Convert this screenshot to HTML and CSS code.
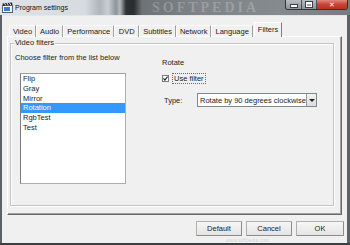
FILE: index.html
```html
<!DOCTYPE html>
<html lang="en">
<head>
    <meta charset="UTF-8">
    <title>Program settings</title>
    <link rel="stylesheet" href="styles.css">
</head>
<body>
<div class="window">
    <!-- Title bar -->
    <div class="titlebar">
        <svg class="app-icon" width="11" height="11" viewBox="0 0 11 11">
            <rect x="0.5" y="3.5" width="10" height="7" fill="#f4f6f8" stroke="#5a6068"/>
            <path d="M0.5 1.5 L10 0.5 L10.5 3 L1 3.8 Z" fill="#222"/>
            <path d="M2.5 1.3 L3.8 3.4 M5 1 L6.3 3.2 M7.5 0.8 L8.8 3" stroke="#fff" stroke-width="0.9"/>
            <rect x="2" y="5" width="6" height="4" fill="#3a7bd5"/>
        </svg>
        <span class="title">Program settings</span>
        <span class="watermark">SOFTPEDIA</span>
        <div class="caption-buttons">
            <span class="cap cap-min"><i></i></span>
            <span class="cap cap-max"><i></i></span>
            <span class="cap cap-close">&#x2715;</span>
        </div>
    </div>

    <!-- Client area -->
    <div class="client">
        <div class="tabs">
            <span class="tab">Video</span>
            <span class="tab">Audio</span>
            <span class="tab">Performance</span>
            <span class="tab">DVD</span>
            <span class="tab">Subtitles</span>
            <span class="tab">Network</span>
            <span class="tab">Language</span>
            <span class="tab active">Filters</span>
        </div>

        <div class="pane">
            <div class="group">
                <div class="group-label">Video filters</div>
                <div class="group-body">
                    <div class="filter-col">
                        <div class="hint">Choose filter from the list below</div>
                        <ul class="filter-list">
                            <li>Flip</li>
                            <li>Gray</li>
                            <li>Mirror</li>
                            <li class="selected">Rotation</li>
                            <li>RgbTest</li>
                            <li>Test</li>
                        </ul>
                    </div>

                    <div class="rotate-col">
                        <div class="rotate-title">Rotate</div>
                        <div class="check-row">
                            <span class="checkbox">
                                <svg width="5" height="5" viewBox="0 0 5 5"><path d="M0.4 2.4 L1.9 4 L4.6 0.6" fill="none" stroke="#222" stroke-width="1.2"/></svg>
                            </span>
                            <span class="focus-label">Use filter</span>
                        </div>
                        <div class="type-row">
                            <span class="type-label">Type:</span>
                            <div class="combo">
                                <span class="combo-text">Rotate by 90 degrees clockwise</span>
                                <span class="combo-btn"><i></i></span>
                            </div>
                        </div>
                    </div>
                </div>
            </div>
        </div>

        <!-- Dialog buttons -->
        <div class="buttons">
            <button class="btn">Default</button>
            <button class="btn">Cancel</button>
            <button class="btn btn-ok">OK</button>
        </div>

        <span class="watermark-url">www.softpedia.com</span>
    </div>
</div>
</body>
</html>
```

FILE: styles.css
```css
* {
    box-sizing: border-box;
}

body {
    margin: 0;
    width: 350px;
    height: 245px;
    overflow: hidden;
    background: #3b3f42;
    font-family: "Liberation Sans", Arial, sans-serif;
    font-size: 7.5px;
    color: #1c1c1c;
}

.window {
    height: 243px;
    display: flex;
    flex-direction: column;
    background: #5d6266;
}

/* Title bar */
.titlebar {
    height: 15px;
    position: relative;
    overflow: hidden;
    display: flex;
    align-items: center;
    background: linear-gradient(90deg, #dfe3e7 0, #d6dbe0 85px, #aeb5bb 100px, #c9ced3 108px,
        #8d949a 116px, #b4babf 120px, #2e3234 126px, #2a2e30 134px, #6d7377 142px,
        #7e8488 200px, #858a8e 280px, #777c80 350px);
}

.app-icon {
    margin-left: 2px;
    flex: none;
}

.title {
    margin-left: 2px;
    font-size: 7px;
    color: #111;
}

.watermark {
    position: absolute;
    left: 152px;
    top: 0;
    line-height: 15px;
    font-family: "Liberation Serif", serif;
    font-weight: bold;
    font-size: 14px;
    letter-spacing: 3px;
    color: rgba(255, 255, 255, 0.22);
}

.caption-buttons {
    margin-left: auto;
    margin-right: 2px;
    align-self: flex-start;
    display: flex;
    height: 10px;
    border: 1px solid rgba(30, 34, 38, 0.8);
    border-top: none;
    border-radius: 0 0 3px 3px;
    overflow: hidden;
    position: relative;
}

.cap {
    height: 9px;
    display: flex;
    align-items: center;
    justify-content: center;
    background: linear-gradient(#b9bec3, #8d9398);
    border-right: 1px solid rgba(40, 44, 48, 0.7);
}

.cap-min {
    width: 16px;
}

.cap-min i {
    width: 6px;
    height: 2px;
    margin-top: 3px;
    background: #fff;
    box-shadow: 0 0 0 1px #3c4044;
}

.cap-max {
    width: 15px;
}

.cap-max i {
    width: 6px;
    height: 5px;
    border: 1px solid #fff;
    border-top-width: 2px;
    box-shadow: 0 0 0 1px #3c4044;
}

.cap-close {
    width: 30px;
    border-right: none;
    background: linear-gradient(#e0877b, #c54434 50%, #b8321f);
    color: #fff;
    font-size: 7px;
    font-weight: bold;
    font-family: "DejaVu Sans", sans-serif;
}

/* Client area */
.client {
    flex: 1;
    position: relative;
    margin: 0 3px 0 2px;
    background: #f0f0f0;
    padding: 6px 3px 0 5px;
    border-top: 1px solid #e4e6e8;
}

.tabs {
    display: flex;
    align-items: flex-end;
    height: 15px;
    padding-left: 2px;
    margin-bottom: -1px;
    position: relative;
    z-index: 1;
}

.tab {
    height: 12px;
    line-height: 11px;
    padding: 0 3px;
    min-width: 25px;
    text-align: center;
    white-space: nowrap;
    border-left: 1px solid #fff;
    border-top: 1px solid #fafafa;
    border-right: 1px solid #a0a0a0;
}

.tab.active {
    height: 15px;
    line-height: 13px;
    margin-left: 1px;
    background: #f2f2f2;
    border-left: 1px solid #fff;
    border-top: 1px solid #fff;
    border-right: 1px solid #7e7e7e;
}

.pane {
    height: 179px;
    margin-right: 2px;
    border: 1px solid;
    border-color: #fff #696969 #696969 #fff;
    box-shadow: inset -1px -1px #a0a0a0;
    padding: 6px 7px 0 2px;
}

.group {
    height: 163px;
    border: 1px solid #c4c4c4;
    box-shadow: inset 1px 1px #fff, 1px 1px #fff;
    padding: 0 0 0 4px;
}

.group-label {
    width: fit-content;
    margin: -6px 0 0 -1px;
    padding: 0 1px;
    line-height: 10px;
    background: #f0f0f0;
}

.group-body {
    display: flex;
    margin-top: 5px;
}

.filter-col {
    width: 111px;
    flex: none;
}

.hint {
    line-height: 10px;
    white-space: nowrap;
}

.filter-list {
    list-style: none;
    margin: 10px 0 0 5px;
    padding: 0;
    width: 106px;
    height: 111px;
    background: #fff;
    border: 1px solid #abadb3;
    border-left-color: #7a7d84;
    border-top-color: #9a9da4;
}

.filter-list li {
    height: 9.8px;
    line-height: 9.8px;
    padding-left: 2px;
}

.filter-list li.selected {
    background: #3399ff;
    color: #fff;
}

.rotate-col {
    margin: 5px 0 0 36px;
}

.rotate-title {
    line-height: 10px;
}

.check-row {
    display: flex;
    align-items: center;
    height: 11px;
    margin-top: 5px;
}

.checkbox {
    width: 7px;
    height: 7px;
    border: 1px solid #7a7a7a;
    background: #fff;
    display: flex;
    align-items: center;
    justify-content: center;
}

.focus-label {
    margin-left: 3px;
    padding: 0 1px;
    line-height: 9px;
    border: 1px dotted #6a6a6a;
}

.type-row {
    display: flex;
    align-items: center;
    height: 14px;
    margin-top: 9px;
}

.type-label {
    width: 35px;
    padding-left: 2px;
}

.combo {
    width: 120px;
    height: 14px;
    display: flex;
    align-items: center;
    background: #fff;
    border: 1px solid #828790;
}

.combo-text {
    flex: 1;
    padding-left: 2px;
    white-space: nowrap;
}

.combo-btn {
    width: 10px;
    height: 12px;
    display: flex;
    align-items: center;
    justify-content: center;
    background: linear-gradient(#f4f4f4, #dcdcdc);
    border-left: 1px solid #9a9a9a;
}

.combo-btn i {
    width: 0;
    height: 0;
    border-left: 3px solid transparent;
    border-right: 3px solid transparent;
    border-top: 3px solid #222;
}

/* Dialog buttons */
.buttons {
    display: flex;
    justify-content: flex-end;
    gap: 4px;
    margin-top: 6px;
}

.btn {
    width: 46px;
    height: 15px;
    padding: 0;
    font-family: inherit;
    font-size: 7.5px;
    color: #1c1c1c;
    background: linear-gradient(#f6f6f6, #e4e4e4);
    border: 1px solid #b0b0b0;
    border-right-color: #8c8c8c;
    border-bottom-color: #8c8c8c;
    border-radius: 1px;
}

.btn-ok {
    width: 48px;
}

.watermark-url {
    position: absolute;
    left: 224px;
    bottom: 0;
    line-height: 6px;
    font-size: 5px;
    color: rgba(150, 150, 150, 0.35);
}
```
